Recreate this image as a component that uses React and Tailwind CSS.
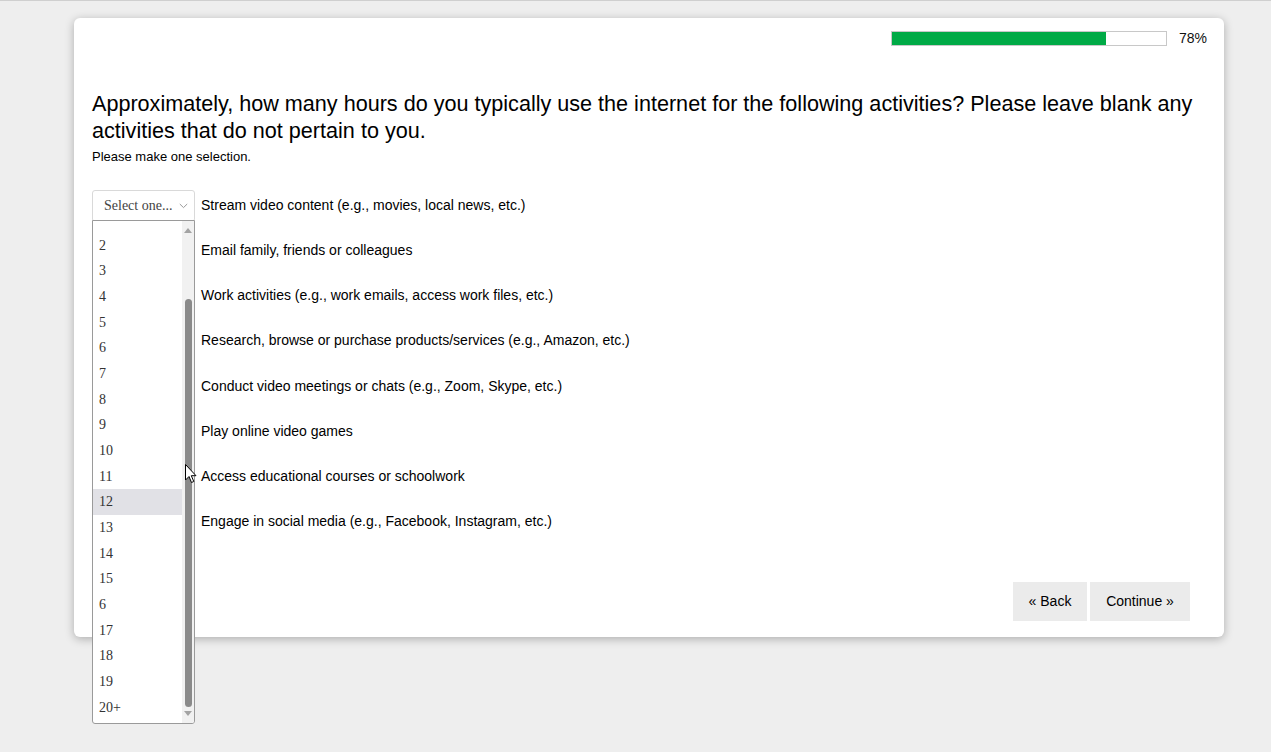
import React from "react";

const rows = [
  "Stream video content (e.g., movies, local news, etc.)",
  "Email family, friends or colleagues",
  "Work activities (e.g., work emails, access work files, etc.)",
  "Research, browse or purchase products/services (e.g., Amazon, etc.)",
  "Conduct video meetings or chats (e.g., Zoom, Skype, etc.)",
  "Play online video games",
  "Access educational courses or schoolwork",
  "Engage in social media (e.g., Facebook, Instagram, etc.)",
];

const options = ["2", "3", "4", "5", "6", "7", "8", "9", "10", "11", "12", "13", "14", "15", "6", "17", "18", "19", "20+"];

function SelectBox({ hidden }) {
  return (
    <div className={"w-[103px] h-[32px] shrink-0 border border-[#d9d9d9] rounded-[3px] bg-white flex items-center pl-[11px] pr-[6px] justify-between " + (hidden ? "invisible" : "")} style={{ fontFamily: '"Liberation Serif", serif' }}>
      <span className="text-[14px] text-[#444]">Select one...</span>
      <svg width="9" height="6" viewBox="0 0 9 6" className="mt-[1px]">
        <path d="M0.8 1 L4.5 4.6 L8.2 1" fill="none" stroke="#999" strokeWidth="1" />
      </svg>
    </div>
  );
}

export default function App() {
  return (
    <div className="min-h-screen bg-[#eeeeee] border-t border-[#cfcfcf] pt-[17px]" style={{ fontFamily: '"Liberation Sans", Arial, sans-serif' }}>
      <div className="relative ml-[74px] w-[1150px] h-[619px] bg-white rounded-[6px] shadow-[0_2px_10px_rgba(0,0,0,0.28)] flex flex-col pl-[18px] pr-[18px]">
        {/* progress */}
        <div className="flex justify-end items-center pt-[10px] gap-[12px]">
          <div className="w-[276px] h-[15px] border border-[#c8c8c8] bg-white">
            <div className="h-full bg-[#00aa46] w-[214px]" />
          </div>
          <span className="text-[14px] text-[#111] w-[27px]">78%</span>
        </div>

        <h1 className="mt-[41px] text-[21.6px] leading-[27px] text-black">
          Approximately, how many hours do you typically use the internet for the following activities? Please leave blank any activities that do not pertain to you.
        </h1>
        <p className="text-[13px] leading-[15px] text-black mt-[5px]">Please make one selection.</p>

        <div className="mt-[19px] flex flex-col">
          {rows.map((r, i) => (
            <div key={i} className="h-[45.15px] flex items-center gap-[6px]">
              <SelectBox hidden={i > 0} />
              <span className="text-[14px] text-black">{r}</span>
            </div>
          ))}
        </div>

        <div className="mt-auto mb-[16px] flex justify-end gap-[3px] pr-[16px]">
          <button className="w-[74px] h-[39px] bg-[#ebebeb] text-[14px] text-black">« Back</button>
          <button className="w-[100px] h-[39px] bg-[#ebebeb] text-[14px] text-black">Continue »</button>
        </div>

        {/* open dropdown list */}
        <div className="absolute left-[18px] top-[202px] w-[103px] h-[504px] bg-white border border-[#9a9a9a] rounded-b-[3px] overflow-hidden flex" style={{ fontFamily: '"Liberation Serif", serif' }}>
          <div className="flex-1 flex flex-col pt-[11.5px]">
            {options.map((o, i) => (
              <div key={i} className={"h-[25.67px] shrink-0 flex items-center pl-[6px] text-[14px] text-[#333] " + (o === "12" ? "bg-[#e1e1e6]" : "")}>
                {o}
              </div>
            ))}
          </div>
          <div className="w-[12px] bg-[#f1f1f1] relative">
            <svg width="12" height="10" viewBox="0 0 12 10" className="absolute left-0 top-[4px]">
              <path d="M2 8 L6 3 L10 8 Z" fill="#a3a3a3" />
            </svg>
            <div className="absolute left-[2.5px] top-[78px] w-[7px] h-[408px] rounded-[4px] bg-[#8a8a8a]" />
            <svg width="12" height="10" viewBox="0 0 12 10" className="absolute left-0 bottom-[4px]">
              <path d="M2 2 L6 7 L10 2 Z" fill="#a3a3a3" />
            </svg>
          </div>
        </div>

        {/* mouse cursor */}
        <svg width="13" height="20" viewBox="0 0 13 20" className="absolute left-[111px] top-[446px]">
          <path d="M0.5 0.5 L0.5 16 L4 12.5 L6.5 18.5 L8.8 17.5 L6.3 11.7 L11 11.7 Z" fill="white" stroke="black" strokeWidth="1" strokeLinejoin="round" />
        </svg>
      </div>
    </div>
  );
}
